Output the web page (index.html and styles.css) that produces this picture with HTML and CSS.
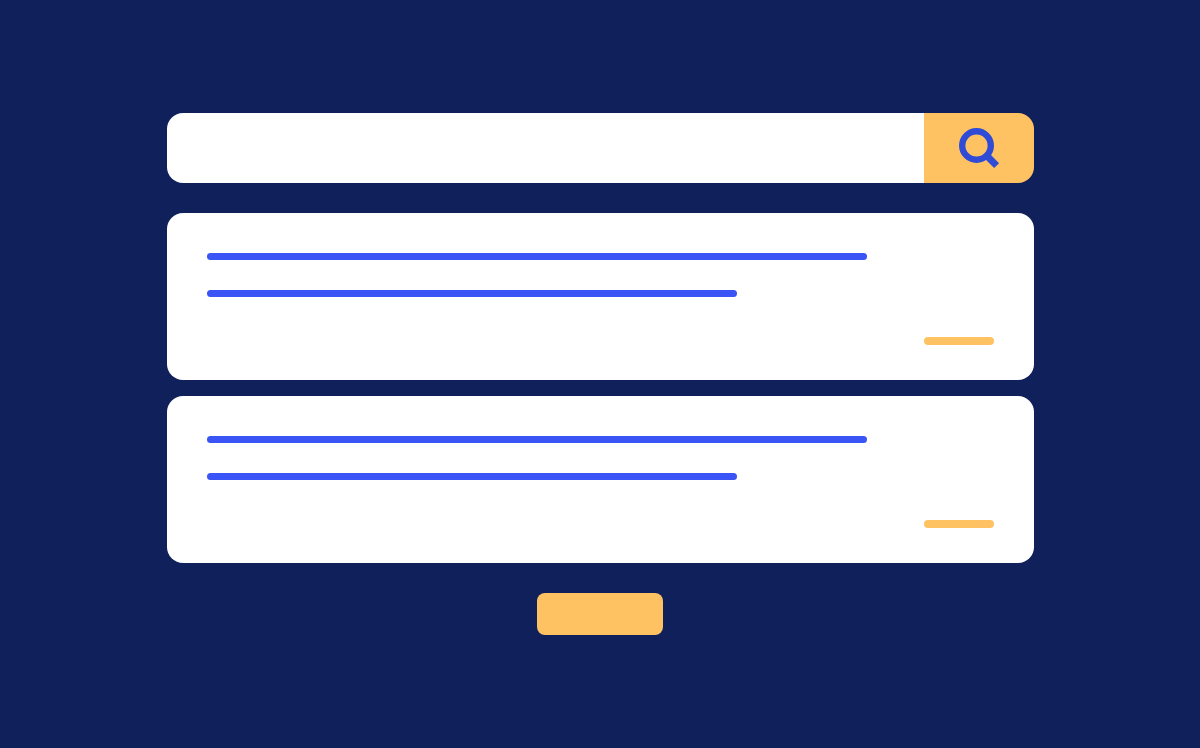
FILE: index.html
```html
<!DOCTYPE html>
<html lang="en">
<head>
  <meta charset="utf-8">
  <meta name="viewport" content="width=device-width, initial-scale=1">
  <title>Search</title>
  <link rel="stylesheet" href="styles.css">
</head>
<body>
  <main class="page">
    <form class="search" role="search">
      <input class="search-input" type="search" aria-label="Search">
      <button class="search-button" type="submit" aria-label="Submit search">
        <svg class="search-icon" viewBox="0 0 40 40" aria-hidden="true">
          <circle cx="17.5" cy="17.5" r="14.3" stroke-width="6.4"/>
          <path d="M27 27 37.6 37.6" stroke-width="7"/>
        </svg>
      </button>
    </form>
    <section class="results" aria-label="Results">
      <article class="card">
        <div class="line line-long"></div>
        <div class="line line-medium"></div>
        <div class="tag"></div>
      </article>
      <article class="card">
        <div class="line line-long"></div>
        <div class="line line-medium"></div>
        <div class="tag"></div>
      </article>
    </section>
    <button class="more" type="button" aria-label="Load more"></button>
  </main>
</body>
</html>
```
FILE: styles.css
```css
* {
  box-sizing: border-box;
}

body {
  margin: 0;
  min-height: 100vh;
  display: flex;
  align-items: center;
  justify-content: center;
  background: #10205a;
  font-family: "Open Sans", sans-serif;
}

.page {
  width: 100%;
  max-width: 867px;
  display: flex;
  flex-direction: column;
  gap: 30px;
}

.search {
  display: flex;
  height: 70px;
  border-radius: 16px;
  overflow: hidden;
}

.search-input {
  flex: 1;
  min-width: 0;
  padding: 0 40px;
  border: 0;
  outline: 0;
  background: #fff;
  color: #10205a;
  font: inherit;
  font-size: 24px;
  appearance: none;
}

.search-button {
  width: 110px;
  display: flex;
  align-items: center;
  justify-content: center;
  padding: 0;
  border: 0;
  background: #ffc262;
  cursor: pointer;
}

.search-icon {
  width: 40px;
  height: 40px;
  overflow: visible;
  fill: none;
  stroke: #304bd6;
}

.results {
  display: flex;
  flex-direction: column;
  gap: 16px;
}

.card {
  display: flex;
  flex-direction: column;
  padding: 40px 40px 35px;
  border-radius: 16px;
  background: #fff;
}

.line {
  height: 7px;
  max-width: 100%;
  border-radius: 4px;
  background: #3b54f5;
}

.line-long {
  width: 660px;
}

.line-medium {
  width: 530px;
  margin-top: 30px;
}

.tag {
  align-self: flex-end;
  width: 70px;
  height: 8px;
  margin-top: 40px;
  border-radius: 4px;
  background: #ffc262;
}

.more {
  align-self: center;
  width: 126px;
  height: 42px;
  padding: 0;
  border: 0;
  border-radius: 8px;
  background: #ffc262;
  cursor: pointer;
}
```
